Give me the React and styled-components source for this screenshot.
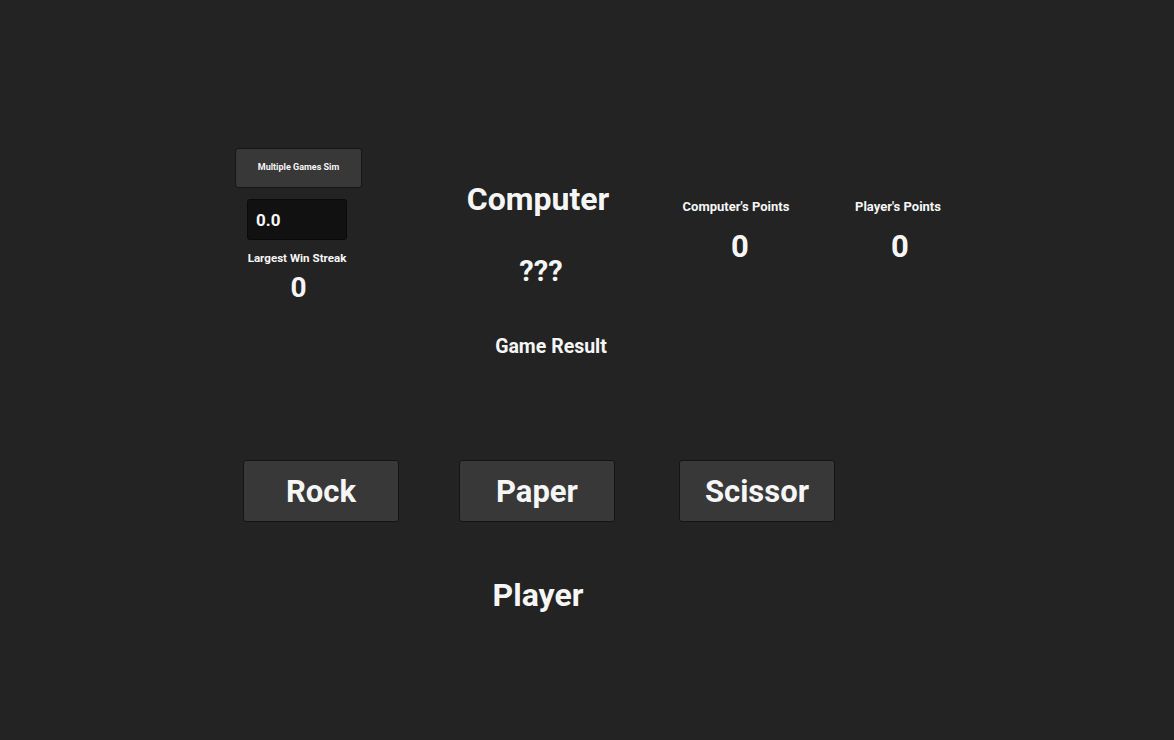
import React from "react";
import styled, { createGlobalStyle } from "styled-components";

const GlobalStyle = createGlobalStyle`
  html, body {
    margin: 0;
    padding: 0;
    background: #232323;
    font-family: Roboto, "Liberation Sans", Arial, sans-serif;
    color: #f6f6f6;
  }
`;

const Page = styled.div`
  width: 1174px;
  height: 740px;
  box-sizing: border-box;
  padding: 148px 0 0 235px;
  overflow: hidden;
`;

const TopArea = styled.div`
  display: flex;
  height: 312px;
`;

const LeftColumn = styled.div`
  width: 127px;
  display: flex;
  flex-direction: column;
`;

const SimButton = styled.button`
  width: 127px;
  height: 40px;
  background: #383838;
  border: 1px solid #151515;
  border-radius: 3px;
  color: #f6f6f6;
  font-family: inherit;
  font-weight: 700;
  font-size: 9px;
  padding: 0 0 2px;
`;

const SimInput = styled.div`
  width: 100px;
  height: 41px;
  box-sizing: border-box;
  margin: 11px 0 0 12px;
  background: #111111;
  border: 1px solid #0a0a0a;
  border-radius: 3px;
  display: flex;
  align-items: center;
  padding-left: 8px;
  font-weight: 700;
  font-size: 17px;
`;

const SmallLabel = styled.div`
  font-weight: 700;
  font-size: ${(p) => p.$size || 12}px;
  line-height: ${(p) => Math.round((p.$size || 12) + 3)}px;
  text-align: center;
  margin-top: ${(p) => p.$top || 0}px;
  padding-right: ${(p) => p.$back || 0}px;
`;

const Value = styled.div`
  font-weight: 700;
  font-size: ${(p) => p.$size}px;
  line-height: ${(p) => p.$size + 6}px;
  text-align: center;
  margin-top: ${(p) => p.$top || 0}px;
  padding-left: ${(p) => p.$shift || 0}px;
`;

const CenterColumn = styled.div`
  width: 200px;
  margin-left: 76px;
  padding-top: 32px;
  display: flex;
  flex-direction: column;
`;

const Heading = styled.div`
  font-weight: 700;
  font-size: ${(p) => p.$size}px;
  line-height: ${(p) => p.$size + 6}px;
  text-align: center;
  margin-top: ${(p) => p.$top || 0}px;
  padding-left: ${(p) => p.$shift || 0}px;
`;

const PointsColumn = styled.div`
  width: 120px;
  margin-left: ${(p) => p.$left}px;
  padding-top: 51px;
  display: flex;
  flex-direction: column;
`;

const ChoiceRow = styled.div`
  display: flex;
  padding-left: 8px;
`;

const ChoiceButton = styled.button`
  width: 156px;
  height: 62px;
  margin-left: ${(p) => p.$left || 0}px;
  background: #383838;
  border: 1px solid #141414;
  border-radius: 3px;
  color: #f6f6f6;
  font-family: inherit;
  font-weight: 700;
  font-size: 31px;
  padding: 0;
`;

const PlayerRow = styled.div`
  width: 200px;
  margin: 54px 0 0 203px;
`;

export default function App() {
  return (
    <>
      <GlobalStyle />
      <Page>
        <TopArea>
          <LeftColumn>
            <SimButton>Multiple Games Sim</SimButton>
            <SimInput>0.0</SimInput>
            <SmallLabel $size={11.6} $top={11} $back={3}>Largest Win Streak</SmallLabel>
            <Value $size={28} $top={5}>0</Value>
          </LeftColumn>
          <CenterColumn>
            <Heading $size={32}>Computer</Heading>
            <Heading $size={29} $top={36} $shift={6}>???</Heading>
            <Heading $size={19.5} $top={45} $shift={26}>Game Result</Heading>
          </CenterColumn>
          <PointsColumn $left={40}>
            <SmallLabel $size={13} $back={4}>Computer's Points</SmallLabel>
            <Value $size={31} $top={13} $shift={4}>0</Value>
          </PointsColumn>
          <PointsColumn $left={41}>
            <SmallLabel $size={13} $back={2}>Player's Points</SmallLabel>
            <Value $size={31} $top={13} $shift={2}>0</Value>
          </PointsColumn>
        </TopArea>
        <ChoiceRow>
          <ChoiceButton>Rock</ChoiceButton>
          <ChoiceButton $left={60}>Paper</ChoiceButton>
          <ChoiceButton $left={64}>Scissor</ChoiceButton>
        </ChoiceRow>
        <PlayerRow>
          <Heading $size={32}>Player</Heading>
        </PlayerRow>
      </Page>
    </>
  );
}
